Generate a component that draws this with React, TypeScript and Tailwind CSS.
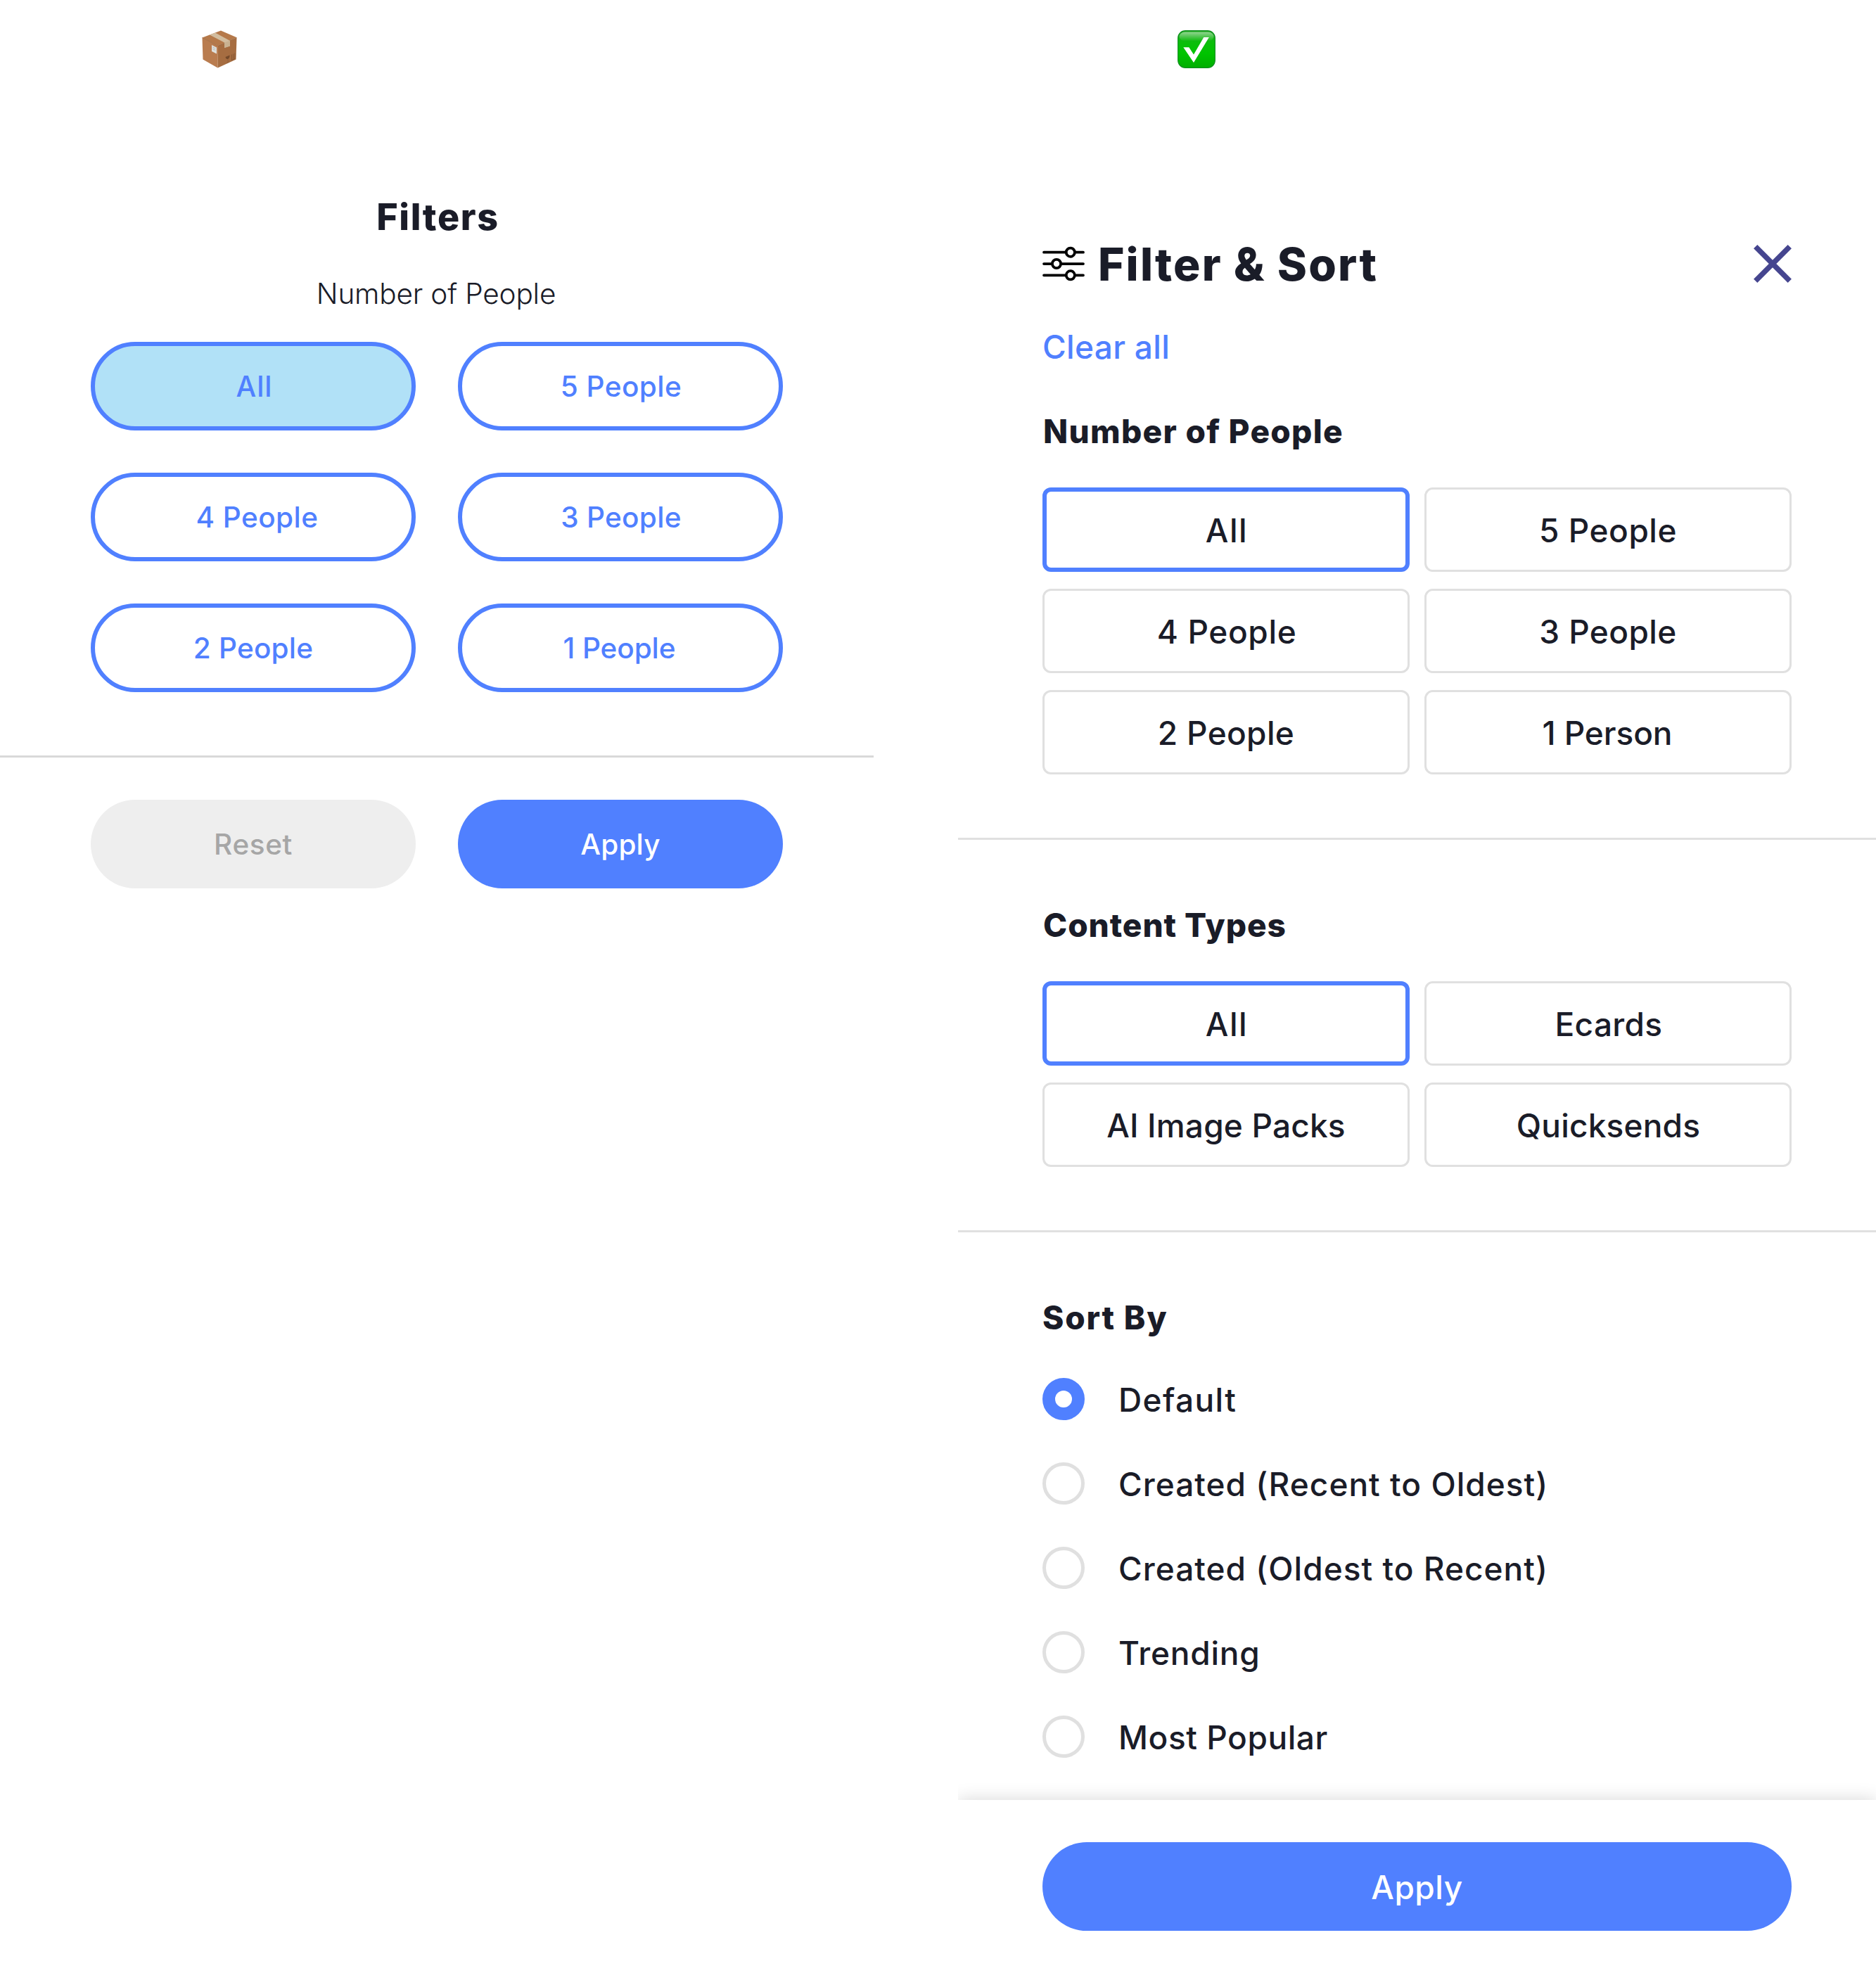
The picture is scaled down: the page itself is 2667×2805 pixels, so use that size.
import clsx from "clsx";

type Option = { label: string; className: string };

const pills: Option[] = [
  { label: "All", className: "tracking-[0.9px] pl-[3px]" },
  { label: "5 People", className: "tracking-[0.45px] pl-[2px]" },
  { label: "4 People", className: "tracking-[0.45px] pl-[11px]" },
  { label: "3 People", className: "tracking-[0.3px] pl-[2px]" },
  { label: "2 People", className: "tracking-[0.19px]" },
  { label: "1 People", className: "tracking-[-0.1px] pr-[3px]" },
];

const people: Option[] = [
  { label: "All", className: "tracking-[1.5px] pl-[2px]" },
  { label: "5 People", className: "tracking-[0.54px]" },
  { label: "4 People", className: "tracking-[0.65px] pl-[2px]" },
  { label: "3 People", className: "tracking-[0.4px]" },
  { label: "2 People", className: "tracking-[0.33px]" },
  { label: "1 Person", className: "tracking-[-0.1px] pr-[2px]" },
];

const contentTypes: Option[] = [
  { label: "All", className: "tracking-[1.5px] pl-[2px]" },
  { label: "Ecards", className: "tracking-[0.33px] pl-[2px]" },
  { label: "AI Image Packs", className: "tracking-[0.17px]" },
  { label: "Quicksends", className: "tracking-[0.18px] pl-[1px]" },
];

const sortOptions: Option[] = [
  { label: "Default", className: "tracking-[1.38px]" },
  { label: "Created (Recent to Oldest)", className: "tracking-[1.02px]" },
  { label: "Created (Oldest to Recent)", className: "tracking-[1.02px]" },
  { label: "Trending", className: "tracking-[0.8px]" },
  { label: "Most Popular", className: "tracking-[0.57px]" },
];

function PackageIcon() {
  return (
    <svg viewBox="0 0 54 54" className="size-[54px]">
      <path d="M1.5 10.5 24 22l-.5 31.5L2.5 41.5z" fill="#b97c4f" />
      <path d="M24 22 50.5 10.5l-1 31L23.5 53.5z" fill="#a66d41" />
      <path d="M1.5 10.500 28 .5l22.5 9.8L24 22z" fill="#b5794a" />
      <path d="m1.500 10.500 22.500 11.700 26.500-11.700" fill="none" stroke="#8f5a30" strokeWidth="0.6" />
      <path d="m12 6.500 8-3L41 15v7.500l-8 2.500v-7.500z" fill="#d2bd9f" />
      <path d="m33 17.500 8-2.700v7.700l-8 2.500z" fill="#c9b291" />
      <path d="m15 21 7 3.500v9L15 30z" fill="#dfe0dc" />
      <path d="m16.300 24 4 2M16.300 26.500l4 2" stroke="#a9b3b4" strokeWidth="0.8" />
      <path d="m34.500 38 6-2.500c.3 3-1 4.800-2.600 5.500-1.800.3-3-.6-3.400-3z" fill="#74492a" />
      <path d="M38 41v4.500m-2 1.200 4-1.700" stroke="#8a5a36" strokeWidth="0.6" />
      <path d="M43.500 34.500v8l4.500-2v-8M45.700 33.500v7" fill="none" stroke="#7d502f" strokeWidth="0.8" />
    </svg>
  );
}

function CheckIcon() {
  return (
    <svg viewBox="0 0 54 54" className="size-[54px]">
      <defs>
        <linearGradient id="check-bg" x1="0" y1="0" x2="0" y2="1">
          <stop offset="0" stopColor="#22a822" />
          <stop offset="0.3" stopColor="#0cbd0c" />
          <stop offset="0.6" stopColor="#00c400" />
          <stop offset="1" stopColor="#00ae00" />
        </linearGradient>
        <linearGradient id="check-shine" x1="0" y1="0" x2="0" y2="1">
          <stop offset="0" stopColor="#fff" stopOpacity="0.5" />
          <stop offset="1" stopColor="#fff" stopOpacity="0" />
        </linearGradient>
      </defs>
      <rect x="0.7" y="0.7" width="52.6" height="52.6" rx="10.5" fill="url(#check-bg)" stroke="#0c8f1c" strokeWidth="1.2" />
      <rect x="2.5" y="2.5" width="49" height="13" rx="8" fill="url(#check-shine)" />
      <path d="M8.3 24.3h8l6.7 10.2L37.3 10h7.5L23 46z" fill="#fff" />
    </svg>
  );
}

function SlidersIcon() {
  return (
    <svg viewBox="0 0 60 60" fill="none" stroke="#000" strokeWidth="3.75" strokeLinecap="round" className="size-[60px]">
      <path d="M2 13.7h31.500M46.500 13.700H58M2 30h11.500M26.500 30H58M2 46.300h31.500M46.500 46.300H58" />
      <circle cx="39.8" cy="13.7" r="6.1" />
      <circle cx="20" cy="30" r="6.1" />
      <circle cx="39.8" cy="46.3" r="6.1" />
    </svg>
  );
}

function CloseIcon() {
  return (
    <svg viewBox="0 0 54 54" className="size-[54px]">
      <path d="M2.7 2.7 51.3 51.3M51.3 2.7 2.7 51.3" stroke="#45458f" strokeWidth="7.5" />
    </svg>
  );
}

function OptionGrid({ options }: { options: Option[] }) {
  return (
    <div className="mx-[120px] mt-[47px] grid grid-cols-2 gap-x-[21px] gap-y-6">
      {options.map((option, i) => (
        <button
          key={option.label}
          className={clsx(
            "h-[120px] rounded-xl pt-[3px] text-[46px] font-medium",
            i === 0 ? "border-6 border-[#5080ff]" : "border-3 border-[#e0e0e0]",
            option.className
          )}
        >
          {option.label}
        </button>
      ))}
    </div>
  );
}

function OldFilters() {
  return (
    <section className="w-[1242px] pt-[43px]">
      <div className="pl-[286px]">
        <PackageIcon />
      </div>
      <h1 className="mt-[176px] pl-[3px] text-center text-[52px] leading-[72px] font-extrabold tracking-[1.68px]">
        Filters
      </h1>
      <p className="mt-[43px] pr-[2px] text-center text-[40.5px] leading-[60px] font-light tracking-[-0.17px]">
        Number of People
      </p>
      <div className="mx-[129px] mt-[38px] grid grid-cols-2 gap-[60px]">
        {pills.map((pill, i) => (
          <button
            key={pill.label}
            className={clsx(
              "h-[126px] rounded-full border-6 border-[#5080ff] pt-[2px] text-[40.5px] font-medium text-[#5080ff]",
              i === 0 && "bg-[#b1e1f7]",
              pill.className
            )}
          >
            {pill.label}
          </button>
        ))}
      </div>
      <hr className="mt-[90px] border-t-3 border-[#d9d9d9]" />
      <div className="mx-[129px] mt-[60px] grid grid-cols-2 gap-[60px] text-[40.5px] font-medium">
        <button className="h-[126px] rounded-full bg-[#eeeeee] pt-[2px] tracking-[0.58px] text-[#a6a6a6]">Reset</button>
        <button className="h-[126px] rounded-full bg-[#5080ff] pt-[2px] tracking-[0.15px] text-white">Apply</button>
      </div>
    </section>
  );
}

function FilterAndSort() {
  return (
    <section className="w-[1305px] overflow-hidden pt-[43px]">
      <div className="pl-[312px]">
        <CheckIcon />
      </div>
      <header className="mx-[120px] mt-[239px] flex h-[78px] items-center">
        <SlidersIcon />
        <h1 className="ml-[19px] pt-[1px] text-[64px] leading-[78px] font-extrabold tracking-[2.15px]">
          Filter &amp; Sort
        </h1>
        <button className="ml-auto">
          <CloseIcon />
        </button>
      </header>
      <a className="mx-[120px] mt-[46px] block text-[46px] leading-[66px] font-medium tracking-[0.31px] text-[#5080ff]">
        Clear all
      </a>

      <h2 className="mx-[120px] mt-[54px] pl-[1px] text-[46px] leading-[66px] font-extrabold tracking-[1.28px]">
        Number of People
      </h2>
      <OptionGrid options={people} />
      <hr className="mt-[90px] border-t-3 border-[#e0e0e0]" />

      <h2 className="mx-[120px] mt-[88px] pl-[1px] text-[46px] leading-[66px] font-extrabold tracking-[0.95px]">
        Content Types
      </h2>
      <OptionGrid options={contentTypes} />
      <hr className="mt-[90px] border-t-3 border-[#e0e0e0]" />

      <h2 className="mx-[120px] mt-[88px] text-[46px] leading-[66px] font-extrabold tracking-[1.8px]">
        Sort By
      </h2>
      <div className="mx-[120px] mt-[53px] flex flex-col gap-[60px]">
        {sortOptions.map((option, i) => (
          <label key={option.label} className="flex h-[60px] items-center gap-12">
            <span
              className={clsx(
                "size-[60px] rounded-full",
                i === 0 ? "border-18 border-[#5080ff]" : "border-5 border-[#e0e0e0]"
              )}
            />
            <span className={clsx("pt-[1px] text-[46px] leading-[60px] font-medium", option.className)}>
              {option.label}
            </span>
          </label>
        ))}
      </div>

      <footer className="mt-[60px] bg-white px-[120px] py-[60px] shadow-[0_0_24px_rgba(0,0,0,0.16)]">
        <button className="h-[126px] w-full rounded-full bg-[#5080ff] pt-[2px] text-[46px] font-medium tracking-[0.5px] text-white">
          Apply
        </button>
      </footer>
    </section>
  );
}

export default function App() {
  return (
    <main className="flex h-[2805px] w-[2667px] justify-between bg-white font-['Inter',sans-serif] text-[#1a1c28]">
      <OldFilters />
      <FilterAndSort />
    </main>
  );
}
